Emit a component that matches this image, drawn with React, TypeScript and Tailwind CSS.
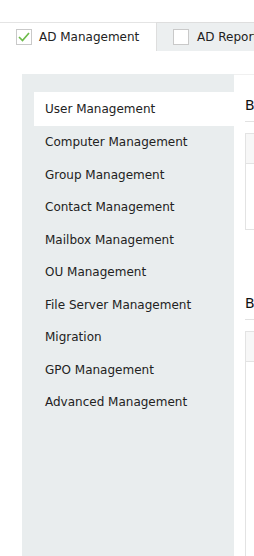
import React from "react";

const menuItems = [
  "User Management",
  "Computer Management",
  "Group Management",
  "Contact Management",
  "Mailbox Management",
  "OU Management",
  "File Server Management",
  "Migration",
  "GPO Management",
  "Advanced Management",
];

function Checkbox({ checked }: { checked: boolean }) {
  return (
    <span className="flex h-4 w-4 shrink-0 items-center justify-center border border-[#c9c9c9] bg-white">
      {checked && (
        <svg width="12" height="10" viewBox="0 0 12 10">
          <polyline
            points="1,5 4.5,8.5 11,1"
            fill="none"
            stroke="#6dbb4a"
            strokeWidth="1.7"
          />
        </svg>
      )}
    </span>
  );
}

function Section({ title, grow }: { title: string; grow?: boolean }) {
  return (
    <div className={grow ? "flex flex-1 flex-col" : "flex flex-col"}>
      <div className="flex h-[47px] items-end border-b border-[#e2e2e2] pb-[7px]">
        <span className="whitespace-nowrap text-[14px] leading-[17px] text-[#111]">
          {title}
        </span>
      </div>
      <div
        className={
          grow
            ? "mt-[11px] flex flex-1 flex-col border-l border-t border-[#e3e3e3]"
            : "mt-[11px] flex h-[97px] flex-col border border-r-0 border-[#e3e3e3]"
        }
      >
        <div className="h-[30px] border-b border-[#e3e3e3] bg-[#f7f7f7]" />
        <div className="flex-1 bg-white" />
      </div>
    </div>
  );
}

export default function App() {
  return (
    <div
      className="flex h-[556px] w-full flex-col overflow-hidden bg-white text-[12px] text-[#222]"
      style={{ fontFamily: '"DejaVu Sans", Verdana, sans-serif' }}
    >
      <div className="h-[22px] shrink-0" />
      <div className="flex h-[29px] shrink-0">
        <div className="flex w-[156px] shrink-0 items-center gap-[7px] border-t border-[#e4e4e4] bg-white pl-4">
          <Checkbox checked />
          <span className="whitespace-nowrap">AD Management</span>
        </div>
        <div className="flex min-w-0 flex-1 items-center gap-2 overflow-hidden border-l border-t border-[#dedede] bg-[#eceff0] pl-4">
          <Checkbox checked={false} />
          <span className="whitespace-nowrap">AD Reports</span>
        </div>
      </div>
      <div className="h-[23px] shrink-0" />
      <div className="flex flex-1 pl-[22px]">
        <div className="w-[212px] shrink-0 bg-[#e9edee] pt-[18px]">
          {menuItems.map((item, i) => (
            <div
              key={item}
              className={
                i === 0
                  ? "ml-3 flex h-[33.5px] items-center bg-white pl-[11px] pt-px"
                  : "ml-3 flex h-[32.5px] items-center pl-[11px] pt-px"
              }
            >
              <span className="whitespace-nowrap">{item}</span>
            </div>
          ))}
        </div>
        <div className="flex min-w-0 flex-1 flex-col overflow-hidden border-t border-[#f0f0f0] pl-[11px]">
          <Section title="Bulk User Modification" />
          <div className="h-[43px] shrink-0" />
          <Section title="Bulk User Creation" grow />
        </div>
      </div>
    </div>
  );
}
